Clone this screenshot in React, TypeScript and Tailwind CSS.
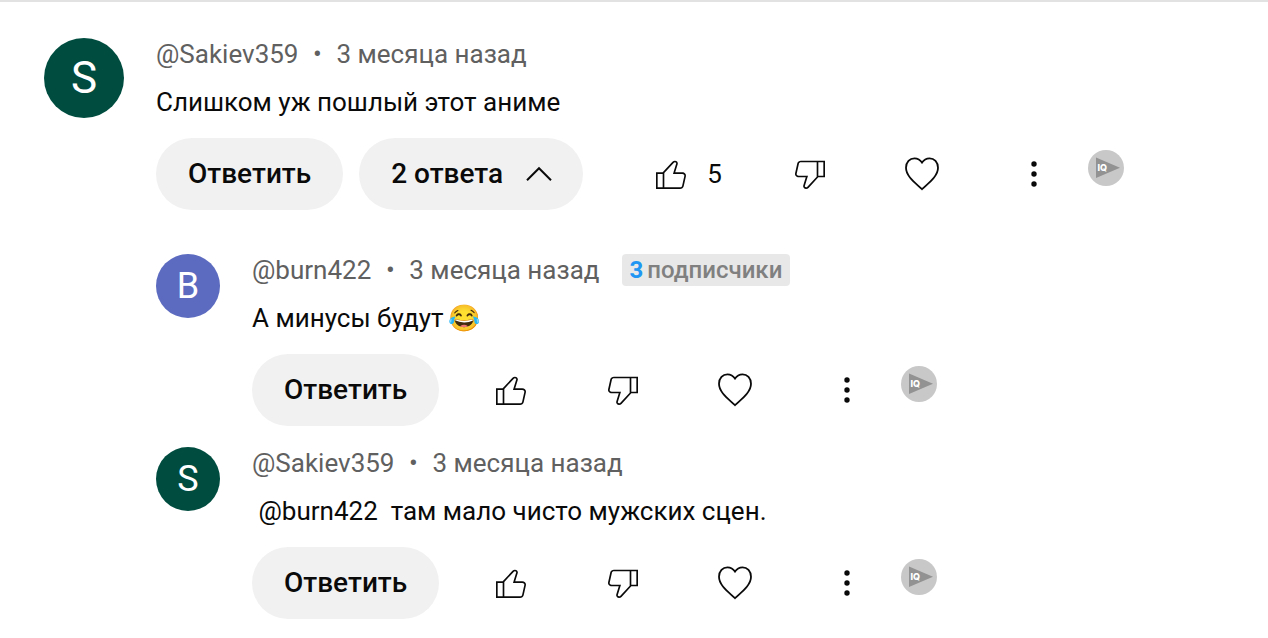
import type { ReactNode } from "react";

function LikeIcon() {
  return (
    <svg viewBox="0 0 24 24" className="size-10" fill="currentColor" aria-hidden="true">
      <path d="M18.77,11h-4.23l1.52-4.94C16.38,5.03,15.54,4,14.38,4c-0.58,0-1.14,0.24-1.52,0.65L7,11H3v10h4h1h9.43c1.06,0,1.98-0.67,2.19-1.61l1.34-6C21.23,12.15,20.18,11,18.77,11z M7,20H4v-8h3V20z M19.98,13.17l-1.34,6C18.54,19.65,18.03,20,17.43,20H8v-8.61l5.6-6.06C13.79,5.12,14.08,5,14.38,5c0.26,0,0.5,0.11,0.63,0.3c0.07,0.1,0.15,0.26,0.09,0.47l-1.52,4.94L13.18,12h1.35h4.23c0.41,0,0.8,0.17,1.03,0.46C19.92,12.61,20.05,12.86,19.98,13.17z" />
    </svg>
  );
}

function DislikeIcon() {
  return (
    <svg viewBox="0 0 24 24" className="size-10" fill="currentColor" aria-hidden="true">
      <path d="M17,4h-1H6.57C5.5,4,4.59,4.67,4.38,5.61l-1.34,6C2.77,12.85,3.82,14,5.23,14h4.23l-1.52,4.94C7.62,19.97,8.46,21,9.62,21c0.58,0,1.14-0.24,1.52-0.65L17,14h4V4H17z M10.4,19.67C10.21,19.88,9.92,20,9.62,20c-0.26,0-0.5-0.11-0.63-0.3c-0.07-0.1-0.15-0.26-0.09-0.47l1.52-4.94l0.4-1.29H9.46H5.23c-0.41,0-0.8-0.17-1.03-0.46c-0.12-0.15-0.25-0.4-0.18-0.72l1.34-6C5.46,5.35,5.97,5,6.57,5H16v8.61L10.4,19.67z M20,13h-3V5h3V13z" />
    </svg>
  );
}

function HeartIcon() {
  return (
    <svg viewBox="0 0 40 40" className="size-10" fill="none" stroke="currentColor" strokeWidth="1.8" aria-hidden="true">
      <path d="M20 35.2C13.5 29 4 22.4 4 13.8C4 8.2 7.8 4.3 12.4 4.3C15.7 4.3 18.4 6 20 8.6C21.6 6 24.3 4.3 27.6 4.3C32.2 4.3 36 8.2 36 13.8C36 22.4 26.5 29 20 35.2Z" />
    </svg>
  );
}

function DotsIcon() {
  return (
    <svg viewBox="0 0 40 40" className="size-10" fill="currentColor" aria-hidden="true">
      <circle cx="20" cy="10" r="2.7" />
      <circle cx="20" cy="20" r="2.7" />
      <circle cx="20" cy="30" r="2.7" />
    </svg>
  );
}

function ChevronUpIcon() {
  return (
    <svg viewBox="0 0 40 40" className="size-10" fill="none" stroke="currentColor" strokeWidth="2" aria-hidden="true">
      <path d="M8 26.2L20 14.2L32 26.2" />
    </svg>
  );
}

function IqIcon() {
  return (
    <svg viewBox="0 0 36 36" className="size-9" aria-hidden="true">
      <circle cx="18" cy="18" r="18" fill="#c8c8c8" />
      <path d="M8 7.5L32 17.8L8 28Z" fill="#929292" />
      <text x="9.5" y="21.3" fontSize="9" fontWeight="800" fontFamily="Inter, sans-serif" fill="#ffffff">
        IQ
      </text>
    </svg>
  );
}

function IconButton({ label, children }: { label: string; children: ReactNode }) {
  return (
    <button type="button" aria-label={label} className="flex size-18 items-center justify-center rounded-full">
      {children}
    </button>
  );
}

type CommentProps = {
  author: string;
  initial: string;
  avatarClass: string;
  small?: boolean;
  badge?: ReactNode;
  text: ReactNode;
  likes?: number;
  replies?: string;
};

function Comment({ author, initial, avatarClass, small, badge, text, likes, replies }: CommentProps) {
  return (
    <article className="flex items-start gap-8">
      <a
        href="#channel"
        aria-label={author}
        className={`flex shrink-0 items-center justify-center rounded-full text-white ${small ? "size-16 text-4xl" : "size-20 text-[44px]"} ${avatarClass}`}
      >
        {initial}
      </a>
      <div className="min-w-0 flex-1">
        <header className="flex h-8 items-center text-[26px] leading-8 text-[#606060]">
          <a href="#channel">{author}</a>
          <span className="w-[38px] text-center">•</span>
          <a href="#comment">3 месяца назад</a>
          {badge}
        </header>
        <p className="mt-3.5 text-[26px] leading-9 whitespace-pre-wrap">{text}</p>
        <div className="mt-4.5 flex items-center">
          <button type="button" className="h-18 rounded-full bg-[#f1f1f1] px-8 text-[28px] font-medium">
            Ответить
          </button>
          {replies && (
            <button
              type="button"
              aria-expanded="true"
              className="mr-4 ml-4 flex h-18 items-center gap-4 rounded-full bg-[#f1f1f1] pr-6 pl-8 text-[28px] font-medium"
            >
              {replies}
              <ChevronUpIcon />
            </button>
          )}
          <div className="ml-9 flex items-center gap-10">
            <div className="flex items-center">
              <IconButton label="Нравится">
                <LikeIcon />
              </IconButton>
              {likes !== undefined && <span className="w-[27px] text-[26px]">{likes}</span>}
            </div>
            <IconButton label="Не нравится">
              <DislikeIcon />
            </IconButton>
            <IconButton label="Отметить сердечком">
              <HeartIcon />
            </IconButton>
            <IconButton label="Ещё">
              <DotsIcon />
            </IconButton>
          </div>
          <button type="button" aria-label="vidIQ" className="mt-3 ml-4.5 self-start rounded-full">
            <IqIcon />
          </button>
        </div>
      </div>
    </article>
  );
}

export default function App() {
  return (
    <main className="min-h-screen border-t-2 border-[#e2e2e2] bg-white px-11 pt-9 pb-4 font-['Roboto','Noto_Sans',sans-serif] text-[#0a0a0a]">
      <Comment
        author="@Sakiev359"
        initial="S"
        avatarClass="bg-[#004d40]"
        text="Слишком уж пошлый этот аниме"
        likes={5}
        replies="2 ответа"
      />
      <div className="mt-11 ml-28 flex flex-col gap-[21px]">
        <Comment
          small
          author="@burn422"
          initial="B"
          avatarClass="bg-[#5c6bc0]"
          badge={
            <span className="ml-[22px] flex h-8 items-center gap-1 rounded bg-[#e8e8e8] px-2 text-2xl font-medium text-[#808080]">
              <b className="font-bold text-[#2196f3]">3</b>
              подписчики
            </span>
          }
          text={
            <>
              А минусы будут<span className="ml-1">😂</span>
            </>
          }
        />
        <Comment
          small
          author="@Sakiev359"
          initial="S"
          avatarClass="bg-[#004d40]"
          text={" @burn422  там мало чисто мужских сцен."}
        />
      </div>
    </main>
  );
}
